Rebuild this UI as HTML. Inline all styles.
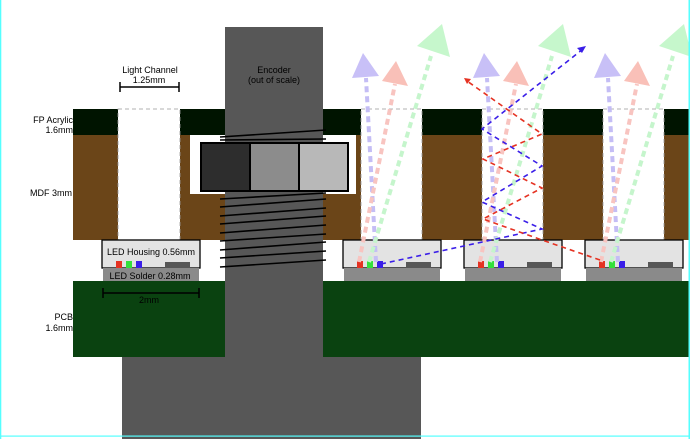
<!DOCTYPE html>
<html><head><meta charset="utf-8"><style>
html,body{margin:0;padding:0;background:#fff;}
svg{display:block;font-family:"Liberation Sans",sans-serif;}
</style></head><body>
<svg width="690" height="439" viewBox="0 0 690 439" xmlns="http://www.w3.org/2000/svg">
<rect width="690" height="439" fill="#fff"/>
<rect x="73" y="109" width="617" height="26" fill="#001400"/>
<rect x="73" y="135" width="617" height="105" fill="#6b4518"/>
<g fill="#fff" stroke="#999" stroke-dasharray="4,3" stroke-width="0.8">
<rect x="118" y="109" width="62" height="131"/>
<rect x="361" y="109" width="61" height="131"/>
<rect x="482" y="109" width="61" height="131"/>
<rect x="603" y="109" width="61" height="131"/>
</g>
<rect x="190" y="135" width="166" height="59" fill="#fff"/>
<rect x="73" y="281" width="617" height="76" fill="#0a4210"/>
<rect x="225" y="27" width="98" height="412" fill="#575757"/>
<rect x="122" y="357" width="299" height="82" fill="#575757"/>
<g stroke="#000" stroke-width="2">
<rect x="201" y="143" width="49" height="48" fill="#2d2d2d"/>
<rect x="250" y="143" width="49" height="48" fill="#8c8c8c"/>
<rect x="299" y="143" width="49" height="48" fill="#b8b8b8"/>
</g>
<g stroke="#000" stroke-width="1.6">
<line x1="220" y1="137" x2="326" y2="130"/>
<line x1="220" y1="140" x2="326" y2="139"/>
<line x1="220" y1="199" x2="326" y2="193"/>
<line x1="220" y1="207" x2="326" y2="199"/>
<line x1="220" y1="216" x2="326" y2="208"/>
<line x1="220" y1="224" x2="326" y2="216"/>
<line x1="220" y1="233" x2="326" y2="225"/>
<line x1="220" y1="241" x2="326" y2="234"/>
<line x1="220" y1="250" x2="326" y2="242"/>
<line x1="220" y1="258" x2="326" y2="251"/>
<line x1="220" y1="267" x2="326" y2="260"/>
</g>
<g id="led">
<rect x="102" y="240" width="98" height="28" fill="#e3e3e3" stroke="#000" stroke-width="1.3"/>
<rect x="103" y="268" width="96" height="13" fill="#8a8a8a"/>
<rect x="116" y="261" width="6" height="7" fill="#e53222"/>
<rect x="126" y="261" width="6" height="7" fill="#33e03a"/>
<rect x="136" y="261" width="6" height="7" fill="#3a1ee8"/>
<rect x="165" y="262" width="25" height="6" fill="#575757"/>
</g>
<use href="#led" x="241"/>
<use href="#led" x="362"/>
<use href="#led" x="483"/>
<g id="rays" stroke-dasharray="6,4" stroke-width="4" fill="none">
<line x1="376" y1="262" x2="366" y2="78" stroke="#c4bdf5"/>
<line x1="359" y1="262" x2="395" y2="84" stroke="#f8c4c0"/>
<line x1="369" y1="262" x2="431" y2="56" stroke="#c5f5cc"/>
<polygon points="363,53 352,78 379,76" fill="#c8c0f7" stroke="none"/>
<polygon points="396,61 382,81 408,86" fill="#f9c0b8" stroke="none"/>
<polygon points="442,24 450,57 417,46" fill="#c6f7cc" stroke="none"/>
</g>
<use href="#rays" x="121"/>
<use href="#rays" x="242"/>
<g fill="none" stroke-width="1.6" stroke-dasharray="5,4">
<polyline stroke="#3a1ee8" points="381,264 542,229 482,202 542,166 482,129 583,49"/>
<polyline stroke="#e53222" points="600,260 542,240 483,219 542,188 483,159 542,134 467,81"/>
</g>
<polygon points="586,46 577,48 582,53" fill="#3a1ee8"/>
<polygon points="464,78 471,79 467,84" fill="#e53222"/>
<g stroke="#000" stroke-width="1.5">
<line x1="120" y1="87" x2="179" y2="87"/>
<line x1="120" y1="82" x2="120" y2="92"/>
<line x1="179" y1="82" x2="179" y2="92"/>
<line x1="103" y1="293" x2="199" y2="293"/>
<line x1="103" y1="288" x2="103" y2="298"/>
<line x1="199" y1="288" x2="199" y2="298"/>
</g>
<g font-size="9" fill="#000">
<text x="150" y="73" text-anchor="middle">Light Channel</text>
<text x="149" y="83" text-anchor="middle">1.25mm</text>
<text x="274" y="73" text-anchor="middle">Encoder</text>
<text x="274" y="83" text-anchor="middle">(out of scale)</text>
<text x="73" y="123" text-anchor="end">FP Acrylic</text>
<text x="73" y="133" text-anchor="end">1.6mm</text>
<text x="30" y="196">MDF 3mm</text>
<text x="151" y="255" text-anchor="middle">LED Housing 0.56mm</text>
<text x="150" y="279" text-anchor="middle">LED Solder 0.28mm</text>
<text x="149" y="303" text-anchor="middle">2mm</text>
<text x="73" y="320" text-anchor="end">PCB</text>
<text x="73" y="331" text-anchor="end">1.6mm</text>
</g>
<rect x="0" y="0" width="1.3" height="439" fill="#5ff"/>
<rect x="688.5" y="0" width="1.5" height="439" fill="#5ff"/>
<rect x="0" y="435.5" width="690" height="1.2" fill="#5ff"/>
</svg>
</body></html>
